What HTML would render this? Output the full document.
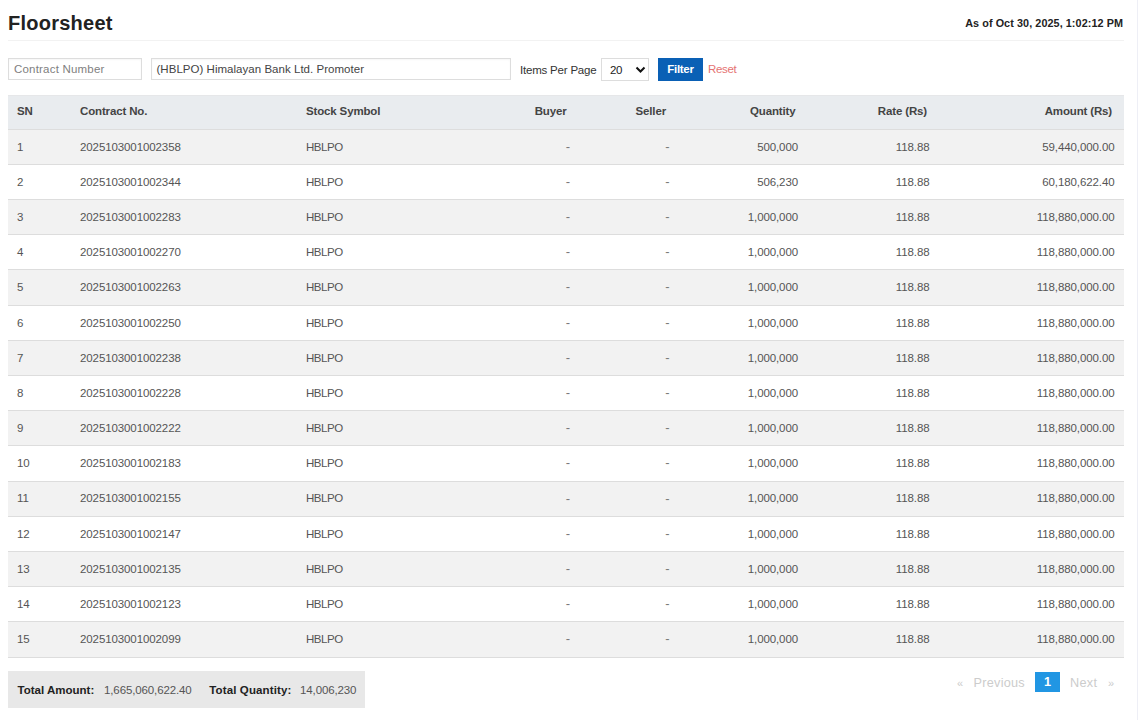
<!DOCTYPE html>
<html lang="en">
<head>
<meta charset="utf-8">
<title>Floorsheet</title>
<style>
*{box-sizing:border-box}
html,body{margin:0;padding:0;background:#fff}
body{width:1138px;height:720px;overflow:hidden;font-family:"Liberation Sans",sans-serif;font-size:11.5px;color:#555;position:relative}
.edge{position:absolute;left:1137px;top:0;width:1px;height:720px;background:#eeeff6}
.title{position:absolute;left:8px;top:9px;font-size:20px;font-weight:bold;color:#222;line-height:28px;letter-spacing:.25px;white-space:nowrap}
.asof{position:absolute;right:15px;top:14.5px;font-size:10.8px;letter-spacing:.08px;font-weight:bold;color:#222;line-height:16px;white-space:nowrap}
.hr{position:absolute;left:8px;width:1116px;top:40px;height:1px;background:#f2f2f2}
.inp{position:absolute;top:58px;height:22px;border:1px solid #ddd;background:#fff;line-height:20px;padding:0 5px;color:#444;box-shadow:inset 0 1px 2px rgba(0,0,0,.04);white-space:nowrap}
.inp.a{left:8px;width:134px;color:#808080;letter-spacing:.2px}
.inp.b{left:151px;width:360px;letter-spacing:.03px;padding-left:4.5px}
.lbl{position:absolute;left:520px;top:62px;color:#333;line-height:16px;letter-spacing:-.2px;white-space:nowrap}
.sel{position:absolute;left:601px;top:58px;width:48px;height:23px;border:1px solid #ddd;line-height:21px;padding-top:1px;padding-left:8px;color:#222;letter-spacing:-.5px}
.sel svg{position:absolute;left:33px;top:7px}
.btn{position:absolute;left:658px;top:58px;width:45px;height:23px;background:#0a60b5;color:#fff;font-weight:bold;line-height:22px;text-align:center;letter-spacing:-.3px}
.reset{position:absolute;left:708px;top:61px;color:#e57373;line-height:16px;letter-spacing:-.35px}
table{position:absolute;left:8px;top:95px;width:1116px;border-collapse:collapse;table-layout:fixed}
th,td{padding:7.9px 9px 8.1px;line-height:18.19px;text-align:left;border-bottom:1px solid #ddd;white-space:nowrap;overflow:hidden}
th{background:#e9ecef;color:#444;font-weight:bold;border-top:1px solid #e6e7e9;padding-top:6px;padding-bottom:8.5px;letter-spacing:-.15px}
th.r{padding-right:12px}
tbody tr:nth-child(odd) td{background:#f2f2f2}
td{letter-spacing:-.1px}
td.r{padding-right:9.5px}
td.c3{letter-spacing:-.45px}
td.c4,td.c5{color:#7a7a7a;font-size:13px;padding-top:8px;padding-bottom:8px;padding-right:8.6px}
.r{text-align:right}
.totals{position:absolute;left:8px;top:671px;width:357px;height:37px;background:#e8e8e8;line-height:38px;color:#555}
.totals b{color:#222}
.totals span{position:absolute;top:0;white-space:nowrap}
.pag{position:absolute;top:674px;font-size:12.7px;line-height:18px;color:#ccc;white-space:nowrap}
.pag.cur{left:1035px;top:672px;width:25px;height:20px;background:#2196e3;color:#fff;font-weight:bold;text-align:center;line-height:20px}
</style>
</head>
<body>
<div class="edge"></div>
<div class="title">Floorsheet</div>
<div class="asof">As of Oct 30, 2025, 1:02:12 PM</div>
<div class="hr"></div>
<div class="inp a">Contract Number</div>
<div class="inp b">(HBLPO) Himalayan Bank Ltd. Promoter</div>
<div class="lbl">Items Per Page</div>
<div class="sel">20<svg width="11" height="8" viewBox="0 0 11 8"><path d="M1.5 1.5 L5.5 5.5 L9.5 1.5" fill="none" stroke="#111" stroke-width="2"/></svg></div>
<div class="btn">Filter</div>
<div class="reset">Reset</div>
<table>
<colgroup><col style="width:63px"><col style="width:226px"><col style="width:182px"><col style="width:99.5px"><col style="width:99.5px"><col style="width:129.5px"><col style="width:131.5px"><col style="width:185px"></colgroup>
<thead><tr><th>SN</th><th>Contract No.</th><th>Stock Symbol</th><th class="r">Buyer</th><th class="r">Seller</th><th class="r">Quantity</th><th class="r">Rate (Rs)</th><th class="r">Amount (Rs)</th></tr></thead>
<tbody>
<tr><td class="c1">1</td><td class="c2">2025103001002358</td><td class="c3">HBLPO</td><td class="c4 r">-</td><td class="c5 r">-</td><td class="c6 r">500,000</td><td class="c7 r">118.88</td><td class="c8 r">59,440,000.00</td></tr>
<tr><td class="c1">2</td><td class="c2">2025103001002344</td><td class="c3">HBLPO</td><td class="c4 r">-</td><td class="c5 r">-</td><td class="c6 r">506,230</td><td class="c7 r">118.88</td><td class="c8 r">60,180,622.40</td></tr>
<tr><td class="c1">3</td><td class="c2">2025103001002283</td><td class="c3">HBLPO</td><td class="c4 r">-</td><td class="c5 r">-</td><td class="c6 r">1,000,000</td><td class="c7 r">118.88</td><td class="c8 r">118,880,000.00</td></tr>
<tr><td class="c1">4</td><td class="c2">2025103001002270</td><td class="c3">HBLPO</td><td class="c4 r">-</td><td class="c5 r">-</td><td class="c6 r">1,000,000</td><td class="c7 r">118.88</td><td class="c8 r">118,880,000.00</td></tr>
<tr><td class="c1">5</td><td class="c2">2025103001002263</td><td class="c3">HBLPO</td><td class="c4 r">-</td><td class="c5 r">-</td><td class="c6 r">1,000,000</td><td class="c7 r">118.88</td><td class="c8 r">118,880,000.00</td></tr>
<tr><td class="c1">6</td><td class="c2">2025103001002250</td><td class="c3">HBLPO</td><td class="c4 r">-</td><td class="c5 r">-</td><td class="c6 r">1,000,000</td><td class="c7 r">118.88</td><td class="c8 r">118,880,000.00</td></tr>
<tr><td class="c1">7</td><td class="c2">2025103001002238</td><td class="c3">HBLPO</td><td class="c4 r">-</td><td class="c5 r">-</td><td class="c6 r">1,000,000</td><td class="c7 r">118.88</td><td class="c8 r">118,880,000.00</td></tr>
<tr><td class="c1">8</td><td class="c2">2025103001002228</td><td class="c3">HBLPO</td><td class="c4 r">-</td><td class="c5 r">-</td><td class="c6 r">1,000,000</td><td class="c7 r">118.88</td><td class="c8 r">118,880,000.00</td></tr>
<tr><td class="c1">9</td><td class="c2">2025103001002222</td><td class="c3">HBLPO</td><td class="c4 r">-</td><td class="c5 r">-</td><td class="c6 r">1,000,000</td><td class="c7 r">118.88</td><td class="c8 r">118,880,000.00</td></tr>
<tr><td class="c1">10</td><td class="c2">2025103001002183</td><td class="c3">HBLPO</td><td class="c4 r">-</td><td class="c5 r">-</td><td class="c6 r">1,000,000</td><td class="c7 r">118.88</td><td class="c8 r">118,880,000.00</td></tr>
<tr><td class="c1">11</td><td class="c2">2025103001002155</td><td class="c3">HBLPO</td><td class="c4 r">-</td><td class="c5 r">-</td><td class="c6 r">1,000,000</td><td class="c7 r">118.88</td><td class="c8 r">118,880,000.00</td></tr>
<tr><td class="c1">12</td><td class="c2">2025103001002147</td><td class="c3">HBLPO</td><td class="c4 r">-</td><td class="c5 r">-</td><td class="c6 r">1,000,000</td><td class="c7 r">118.88</td><td class="c8 r">118,880,000.00</td></tr>
<tr><td class="c1">13</td><td class="c2">2025103001002135</td><td class="c3">HBLPO</td><td class="c4 r">-</td><td class="c5 r">-</td><td class="c6 r">1,000,000</td><td class="c7 r">118.88</td><td class="c8 r">118,880,000.00</td></tr>
<tr><td class="c1">14</td><td class="c2">2025103001002123</td><td class="c3">HBLPO</td><td class="c4 r">-</td><td class="c5 r">-</td><td class="c6 r">1,000,000</td><td class="c7 r">118.88</td><td class="c8 r">118,880,000.00</td></tr>
<tr><td class="c1">15</td><td class="c2">2025103001002099</td><td class="c3">HBLPO</td><td class="c4 r">-</td><td class="c5 r">-</td><td class="c6 r">1,000,000</td><td class="c7 r">118.88</td><td class="c8 r">118,880,000.00</td></tr>
</tbody>
</table>
<div class="totals"><span style="left:9.6px"><b>Total Amount:</b></span><span style="left:96px;letter-spacing:-.12px">1,665,060,622.40</span><span style="left:201.2px"><b style="letter-spacing:.14px">Total Quantity:</b></span><span style="left:292px;letter-spacing:-.12px">14,006,230</span></div>
<div class="pag" style="left:957px;font-size:11px">«</div>
<div class="pag" style="left:973.6px;letter-spacing:.25px">Previous</div>
<div class="pag cur">1</div>
<div class="pag" style="left:1070px;letter-spacing:.3px">Next</div>
<div class="pag" style="left:1108px;font-size:11px">»</div>
</body>
</html>
